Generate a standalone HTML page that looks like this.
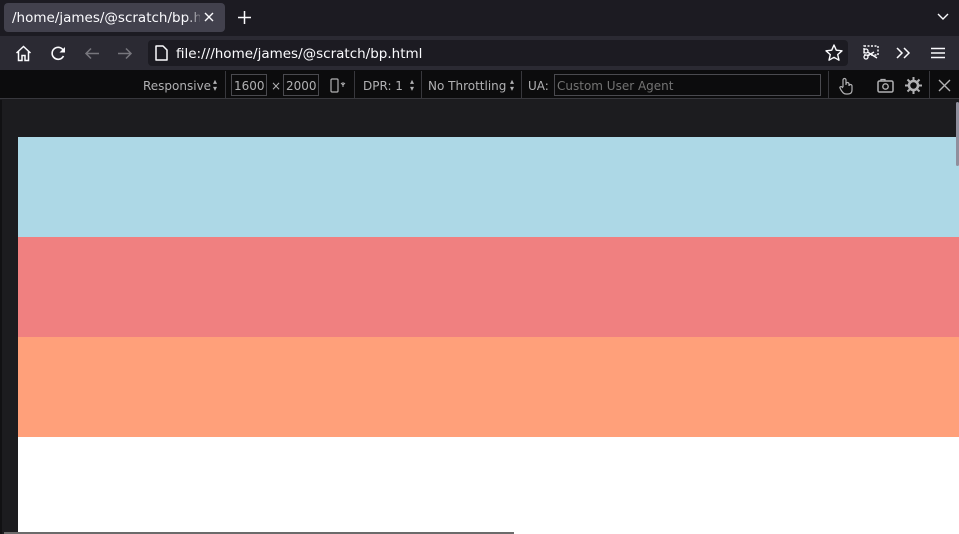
<!DOCTYPE html>
<html><head><meta charset="utf-8"><style>
*{margin:0;padding:0;box-sizing:border-box}
body{width:959px;height:534px;overflow:hidden;background:#1c1c1f;font-family:"DejaVu Sans","Liberation Sans",sans-serif;position:relative}
.abs{position:absolute}
svg{position:absolute;overflow:visible}
</style></head><body>
<!-- tab bar -->
<div class="abs" style="left:0;top:0;width:959px;height:36px;background:#1c1b22"></div>
<div class="abs" style="left:4px;top:3px;width:221px;height:29px;background:#42414d;border-radius:4px;overflow:hidden">
 <div class="abs" style="left:8px;top:7px;font-size:13.5px;color:#fbfbfe;white-space:nowrap;width:188px;overflow:hidden">/home/james/@scratch/bp.html</div>
 <div class="abs" style="left:182px;top:0;width:18px;height:29px;background:linear-gradient(to right,rgba(66,65,77,0),#42414d)"></div>
</div>
<svg style="left:204px;top:12px" width="10" height="10"><path d="M1 1L9 9M9 1L1 9" stroke="#fbfbfe" stroke-width="1.4"/></svg>
<svg style="left:238px;top:11px" width="13" height="13"><path d="M6.5 0V13M0 6.5H13" stroke="#fbfbfe" stroke-width="1.5"/></svg>
<svg style="left:937px;top:13px" width="12" height="8"><path d="M1 1L6 6L11 1" stroke="#fbfbfe" stroke-width="1.4" fill="none"/></svg>
<!-- nav bar -->
<div class="abs" style="left:0;top:36px;width:959px;height:34px;background:#2b2a33"></div>
<svg style="left:15px;top:45px" width="17" height="17"><path d="M1.5 8L8.5 1.5L15.5 8M3.5 6.5V15.5H7V10.5H10V15.5H13.5V6.5" stroke="#fbfbfe" stroke-width="1.5" fill="none"/></svg>
<svg style="left:50px;top:45px" width="17" height="17"><path d="M14 7A6 6 0 1 0 13.5 11" stroke="#fbfbfe" stroke-width="1.6" fill="none"/><path d="M15 2V7.5H9.5" fill="#fbfbfe"/></svg>
<svg style="left:84px;top:47px" width="16" height="13"><path d="M15 6.5H2M7 1.5L2 6.5L7 11.5" stroke="#77767d" stroke-width="1.5" fill="none"/></svg>
<svg style="left:117px;top:47px" width="16" height="13"><path d="M1 6.5H14M9 1.5L14 6.5L9 11.5" stroke="#77767d" stroke-width="1.5" fill="none"/></svg>
<div class="abs" style="left:148px;top:40px;width:700px;height:26px;background:#1c1b22;border-radius:4px"></div>
<svg style="left:155px;top:45px" width="13" height="16"><path d="M1 1H8L12 5V15H1Z" stroke="#fbfbfe" stroke-width="1.5" fill="none" stroke-linejoin="round"/></svg>
<div class="abs" style="left:176px;top:46px;font-size:13.5px;color:#fbfbfe">file:///home/james/@scratch/bp.html</div>
<svg style="left:825px;top:44px" width="18" height="17"><path d="M9 1L11.3 6.2L17 6.8L12.7 10.6L14 16.2L9 13.3L4 16.2L5.3 10.6L1 6.8L6.7 6.2Z" stroke="#fbfbfe" stroke-width="1.4" fill="none" stroke-linejoin="round"/></svg>
<svg style="left:862px;top:45px" width="18" height="16"><rect x="2" y="1" width="14" height="9" stroke="#fbfbfe" stroke-width="1.4" fill="none" stroke-dasharray="2 1.5"/><circle cx="4" cy="12" r="2" stroke="#fbfbfe" fill="none" stroke-width="1.3"/><circle cx="4" cy="6" r="2" stroke="#fbfbfe" fill="none" stroke-width="1.3"/><path d="M5.5 7L15 13M5.5 11L12 7" stroke="#fbfbfe" stroke-width="1.4"/></svg>
<svg style="left:896px;top:47px" width="15" height="12"><path d="M1 1L6 6L1 11M8 1L13 6L8 11" stroke="#fbfbfe" stroke-width="1.5" fill="none"/></svg>
<svg style="left:931px;top:47px" width="14" height="12"><path d="M0 1.5H14M0 6H14M0 10.5H14" stroke="#fbfbfe" stroke-width="1.5"/></svg>
<!-- RDM toolbar -->
<div class="abs" style="left:0;top:70px;width:959px;height:29px;background:#0c0c0d;border-bottom:1px solid #38383d"></div>
<div class="abs" style="left:143px;top:79px;font-size:12px;color:#b1b1b3">Responsive</div>
<div class="abs" style="left:213px;top:78px;font-size:8px;color:#b1b1b3;line-height:7px">▴<br>▾</div>
<div class="abs" style="left:225px;top:71px;width:1px;height:27px;background:#38383d"></div>
<div class="abs" style="left:231px;top:74px;width:36px;height:22px;border:1px solid #4a4a4f;font-size:12px;color:#b1b1b3;padding:4px 0 0 2px">1600</div>
<div class="abs" style="left:271px;top:79px;font-size:12px;color:#b1b1b3">×</div>
<div class="abs" style="left:283px;top:74px;width:36px;height:22px;border:1px solid #4a4a4f;font-size:12px;color:#b1b1b3;padding:4px 0 0 2px">2000</div>
<svg style="left:330px;top:78px" width="16" height="16"><rect x="1" y="1" width="7" height="13" stroke="#b1b1b3" stroke-width="1.2" fill="none" rx="1"/><path d="M11 5L13 7L15 5M13 4V9" stroke="#b1b1b3" stroke-width="1"/></svg>
<div class="abs" style="left:354px;top:71px;width:1px;height:27px;background:#38383d"></div>
<div class="abs" style="left:363px;top:79px;font-size:12px;color:#b1b1b3">DPR: 1</div>
<div class="abs" style="left:410px;top:78px;font-size:8px;color:#b1b1b3;line-height:7px">▴<br>▾</div>
<div class="abs" style="left:421px;top:71px;width:1px;height:27px;background:#38383d"></div>
<div class="abs" style="left:428px;top:79px;font-size:12px;color:#b1b1b3">No Throttling</div>
<div class="abs" style="left:510px;top:78px;font-size:8px;color:#b1b1b3;line-height:7px">▴<br>▾</div>
<div class="abs" style="left:521px;top:71px;width:1px;height:27px;background:#38383d"></div>
<div class="abs" style="left:528px;top:79px;font-size:12px;color:#b1b1b3">UA:</div>
<div class="abs" style="left:554px;top:74px;width:267px;height:22px;border:1px solid #4a4a4f;background:#0c0c0d;font-size:12px;color:#737373;padding:4px 0 0 2px">Custom User Agent</div>
<div class="abs" style="left:828px;top:71px;width:1px;height:27px;background:#38383d"></div>
<svg style="left:838px;top:77px" width="16" height="18"><path d="M5 10V3A1.5 1.5 0 0 1 8 3V8M8 8V7A1.5 1.5 0 0 1 11 7V9A1.5 1.5 0 0 1 14 9V13C14 16 12 17 10 17H8C6 17 5 16 3 13L2 11C1.5 10 3 9 4 10L5 11" stroke="#b1b1b3" stroke-width="1.2" fill="none"/></svg>
<svg style="left:877px;top:78px" width="17" height="15"><rect x="1" y="3" width="15" height="11" rx="1.5" stroke="#b1b1b3" stroke-width="1.5" fill="none"/><circle cx="8.5" cy="8.5" r="2.7" stroke="#b1b1b3" stroke-width="1.4" fill="none"/><path d="M4 3V1.5H8V3" stroke="#b1b1b3" stroke-width="1.3" fill="none"/></svg>
<svg style="left:905px;top:77px" width="17" height="17"><circle cx="8.5" cy="8.5" r="4.5" stroke="#b1b1b3" stroke-width="2.5" fill="none"/><path d="M8.5 0V17M0 8.5H17M2.5 2.5L14.5 14.5M14.5 2.5L2.5 14.5" stroke="#b1b1b3" stroke-width="2" stroke-dasharray="3 11"/></svg>
<div class="abs" style="left:929px;top:71px;width:1px;height:27px;background:#38383d"></div>
<svg style="left:939px;top:80px" width="11" height="11"><path d="M0 0L11 11M11 0L0 11" stroke="#b1b1b3" stroke-width="1.4"/></svg>
<!-- viewport area -->
<div class="abs" style="left:0;top:100px;width:2px;height:434px;background:#111113"></div>
<div class="abs" style="left:18px;top:137px;width:941px;height:100px;background:#add8e6"></div>
<div class="abs" style="left:18px;top:237px;width:941px;height:100px;background:#f08080"></div>
<div class="abs" style="left:18px;top:337px;width:941px;height:100px;background:#ffa07a"></div>
<div class="abs" style="left:18px;top:437px;width:941px;height:97px;background:#fff"></div>
<div class="abs" style="left:956px;top:102px;width:3px;height:64px;background:#8f8f9d;border-radius:2px"></div>
<div class="abs" style="left:4px;top:532px;width:510px;height:2px;background:#6b6b6b"></div>
</body></html>
